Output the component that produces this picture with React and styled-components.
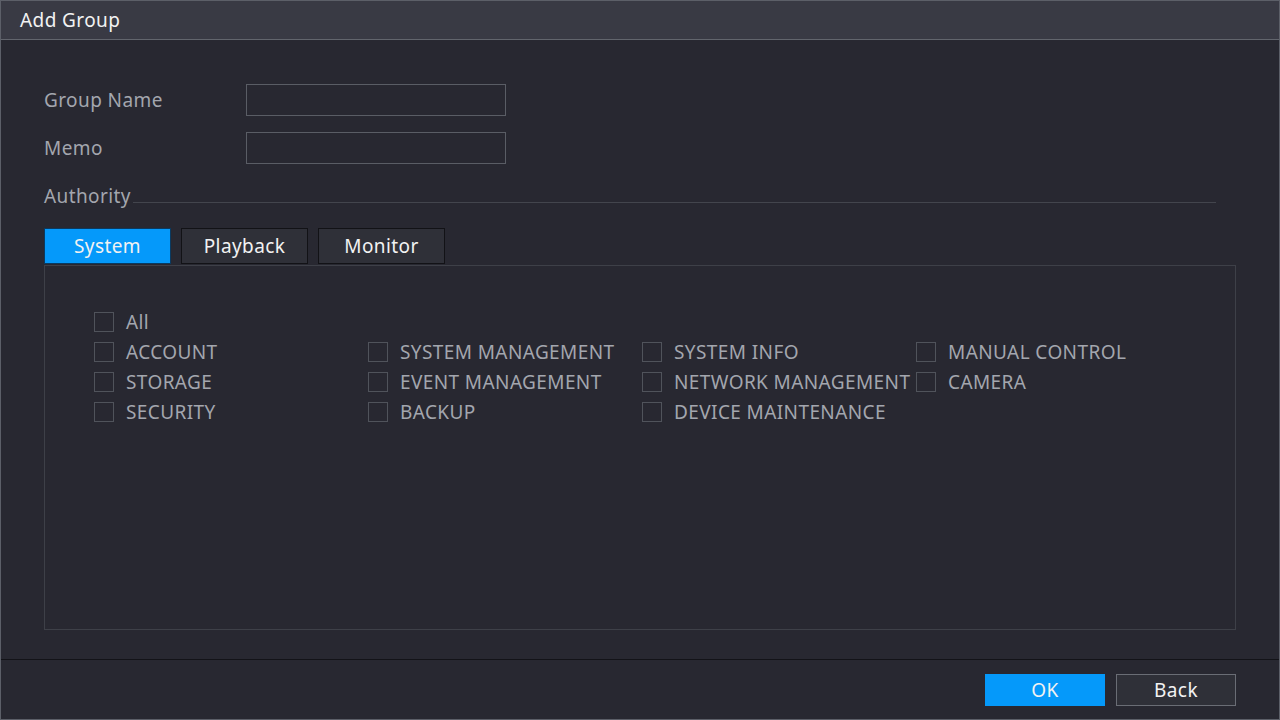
import React, { useState } from "react"
import styled, { createGlobalStyle } from "styled-components"

const Global = createGlobalStyle`
  html, body { margin: 0; padding: 0; background: #282830; }
  body { font-family: "Noto Sans", "Open Sans", sans-serif; letter-spacing: 0.4px; }
`

const Window = styled.div`
  box-sizing: border-box;
  width: 1280px;
  height: 720px;
  border: 1px solid #5c5f68;
  background: #282831;
  display: flex;
  flex-direction: column;
`

const Header = styled.div`
  height: 38px;
  background: #393a44;
  border-bottom: 1px solid #62656d;
  color: #f2f2f2;
  font-size: 19px;
  display: flex;
  align-items: center;
  padding-left: 19px;
`

const Body = styled.div`
  flex: 1;
  padding: 44px 43px 0 43px;
  display: flex;
  flex-direction: column;
`

const FieldRow = styled.div`
  display: flex;
  align-items: center;
  height: 32px;
  margin-bottom: 16px;
`

const Label = styled.div`
  width: 202px;
  color: #a3a6ae;
  font-size: 19px;
`

const Input = styled.input`
  box-sizing: border-box;
  width: 260px;
  height: 32px;
  background: transparent;
  border: 1px solid #5a5d65;
  outline: none;
  color: #ddd;
`

const Legend = styled.div`
  display: flex;
  align-items: center;
  height: 32px;
  margin-right: 20px;
  color: #a3a6ae;
  font-size: 19px;
  &::after {
    content: "";
    flex: 1;
    height: 1px;
    background: #43454d;
    margin-top: 12px;
    margin-left: 2px;
  }
`

const Tabs = styled.div`
  display: flex;
  gap: 10px;
  margin-top: 16px;
  margin-bottom: 1px;
`

const Tab = styled.button`
  box-sizing: border-box;
  width: 127px;
  height: 36px;
  font-family: inherit;
  letter-spacing: inherit;
  font-size: 19px;
  color: #f2f2f2;
  background: ${p => (p.active ? "#0599fa" : "#2f3038")};
  border: 1px solid ${p => (p.active ? "#0a3a60" : "#121216")};
  cursor: pointer;
  padding: 0;
`

const Panel = styled.div`
  box-sizing: border-box;
  height: 365px;
  border: 1px solid #3e4048;
  padding: 41px 49px;
`

const Grid = styled.div`
  display: grid;
  grid-template-columns: repeat(4, 274px);
  grid-auto-rows: 30px;
`

const Item = styled.label`
  display: flex;
  align-items: center;
  gap: 12px;
  color: #a3a6ae;
  font-size: 19px;
  white-space: nowrap;
  cursor: pointer;
`

const Box = styled.span`
  box-sizing: border-box;
  width: 20px;
  height: 20px;
  flex: none;
  border: 1px solid #50535b;
  background: ${p => (p.checked ? "#0599fa" : "transparent")};
`

const Footer = styled.div`
  margin-top: 29px;
  border-top: 1px solid #131318;
  display: flex;
  justify-content: flex-end;
  gap: 11px;
  padding: 14px 43px 0 0;
  height: 45px;
`

const Action = styled.button`
  box-sizing: border-box;
  width: 120px;
  height: 32px;
  font-family: inherit;
  letter-spacing: inherit;
  font-size: 19px;
  color: #f2f2f2;
  padding: 0;
  background: ${p => (p.primary ? "#0599fa" : "#2f3038")};
  border: 1px solid ${p => (p.primary ? "#0599fa" : "#6a6d75")};
`

const items = [
  ["All", null, null, null],
  ["ACCOUNT", "SYSTEM MANAGEMENT", "SYSTEM INFO", "MANUAL CONTROL"],
  ["STORAGE", "EVENT MANAGEMENT", "NETWORK MANAGEMENT", "CAMERA"],
  ["SECURITY", "BACKUP", "DEVICE MAINTENANCE", null],
]

const Check = ({ text }) => {
  const [on, setOn] = useState(false)
  return (
    <Item onClick={() => setOn(!on)}>
      <Box checked={on} />
      {text}
    </Item>
  )
}

export default function App() {
  const [tab, setTab] = useState("System")
  return (
    <>
      <Global />
      <Window>
        <Header>Add Group</Header>
        <Body>
          <FieldRow>
            <Label>Group Name</Label>
            <Input />
          </FieldRow>
          <FieldRow>
            <Label>Memo</Label>
            <Input />
          </FieldRow>
          <Legend>Authority</Legend>
          <Tabs>
            {["System", "Playback", "Monitor"].map(t => (
              <Tab key={t} active={tab === t} onClick={() => setTab(t)}>{t}</Tab>
            ))}
          </Tabs>
          <Panel>
            <Grid>
              {items.flat().map((t, i) => (t ? <Check key={i} text={t} /> : <span key={i} />))}
            </Grid>
          </Panel>
        </Body>
        <Footer>
          <Action primary>OK</Action>
          <Action>Back</Action>
        </Footer>
      </Window>
    </>
  )
}
